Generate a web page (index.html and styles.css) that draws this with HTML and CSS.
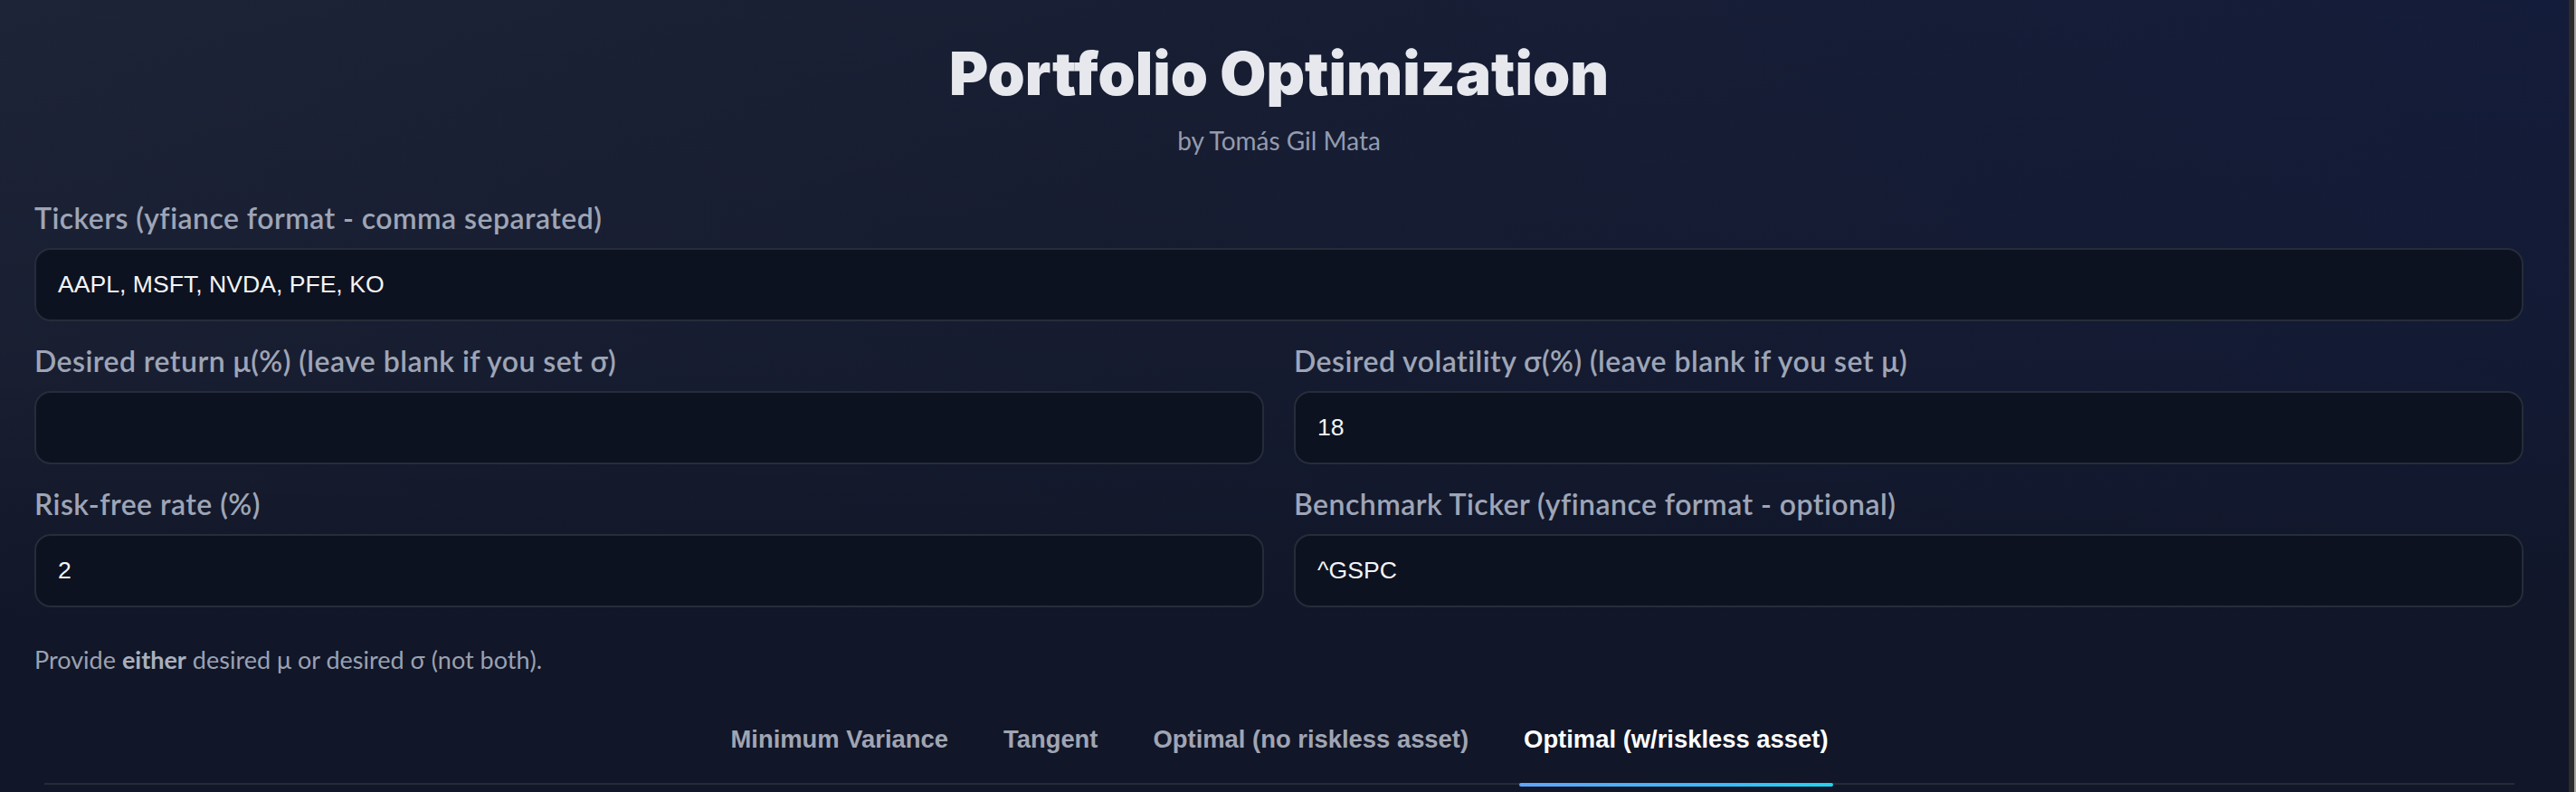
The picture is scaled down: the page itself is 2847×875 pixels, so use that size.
FILE: index.html
```html
<!DOCTYPE html>
<html lang="en">
<head>
<meta charset="utf-8">
<title>Portfolio Optimization</title>
<link rel="stylesheet" href="styles.css">
</head>
<body>
<main class="page">
  <header class="header">
    <h1 class="title">Portfolio Optimization</h1>
    <p class="subtitle">by Tomás Gil Mata</p>
  </header>
  <section class="fields">
    <div class="field field-wide">
      <label class="label">Tickers (yfiance format - comma separated)</label>
      <div class="input">AAPL, MSFT, NVDA, PFE, KO</div>
    </div>
    <div class="field">
      <label class="label">Desired return μ(%) (leave blank if you set σ)</label>
      <div class="input"></div>
    </div>
    <div class="field">
      <label class="label">Desired volatility σ(%) (leave blank if you set μ)</label>
      <div class="input">18</div>
    </div>
    <div class="field">
      <label class="label">Risk-free rate (%)</label>
      <div class="input">2</div>
    </div>
    <div class="field">
      <label class="label">Benchmark Ticker (yfinance format - optional)</label>
      <div class="input">^GSPC</div>
    </div>
  </section>
  <p class="note">Provide <strong>either</strong> desired μ or desired σ (not both).</p>
  <nav class="tabs">
    <span class="tab">Minimum Variance</span>
    <span class="tab">Tangent</span>
    <span class="tab">Optimal (no riskless asset)</span>
    <span class="tab tab-active">Optimal (w/riskless asset)</span>
  </nav>
</main>
<div class="scrollbar"></div>
</body>
</html>
```

FILE: styles.css
```css
html {
  background: #141a2e;
}
body {
  margin: 0;
  height: 875px;
  overflow: hidden;
  background:
    linear-gradient(180deg, rgba(17, 22, 40, 0) 0%, rgba(17, 22, 40, 0.35) 45%, #111628 80%),
    linear-gradient(100deg, #1e2437 0%, #181e33 45%, #131c3b 100%);
  font-family: Lato, "Open Sans", sans-serif;
}
.page {
  padding: 47px 58px 0 38px;
}
.header {
  text-align: center;
}
.title {
  margin: 0;
  font-family: Inter, Roboto, sans-serif;
  font-weight: 900;
  font-size: 66px;
  line-height: 68px;
  color: #e6e8ed;
}
.subtitle {
  margin: 24px 0 0;
  font-size: 28px;
  line-height: 1.2;
  color: #939bae;
}
.fields {
  margin-top: 49px;
  display: grid;
  grid-template-columns: 1fr 1fr;
  column-gap: 33px;
  row-gap: 25px;
}
.field {
  display: flex;
  flex-direction: column;
  gap: 14px;
}
.field-wide {
  grid-column: 1 / -1;
}
.label {
  font-size: 32px;
  line-height: 38px;
  letter-spacing: 0.45px;
  font-weight: 600;
  color: #9ea5b6;
}
.input {
  box-sizing: border-box;
  height: 81px;
  display: flex;
  align-items: center;
  padding: 0 24px;
  border: 2px solid #262c39;
  border-radius: 18px;
  background: #0d1220;
  font-family: "Liberation Sans", Arial, sans-serif;
  font-size: 26.6px;
  color: #f3f4f6;
}
.note {
  margin: 42px 0 0;
  font-size: 27px;
  line-height: 31px;
  color: #9aa1b1;
}
.note strong {
  font-weight: 700;
  color: #a9afbd;
}
.tabs {
  margin: 37px 10px 0 11px;
  display: flex;
  justify-content: center;
  gap: 51px;
  border-bottom: 2px solid #262b3a;
}
.tab {
  position: relative;
  padding: 20px 5px 33px;
  font-family: "Liberation Sans", Arial, sans-serif;
  font-weight: 700;
  font-size: 27.4px;
  line-height: 31px;
  color: #a0a5b3;
}
.tab-active {
  color: #ffffff;
}
.tab-active::after {
  content: "";
  position: absolute;
  left: 0;
  right: 0;
  bottom: -4px;
  height: 4px;
  border-radius: 2px;
  background: linear-gradient(90deg, #60a5fa, #38bdf8 70%, #22d3ee);
}
.scrollbar {
  position: fixed;
  top: 0;
  right: 0;
  bottom: 0;
  width: 8px;
  background: linear-gradient(90deg, #2b2b2b 0 6px, #a3a3a3 6px);
}
```
